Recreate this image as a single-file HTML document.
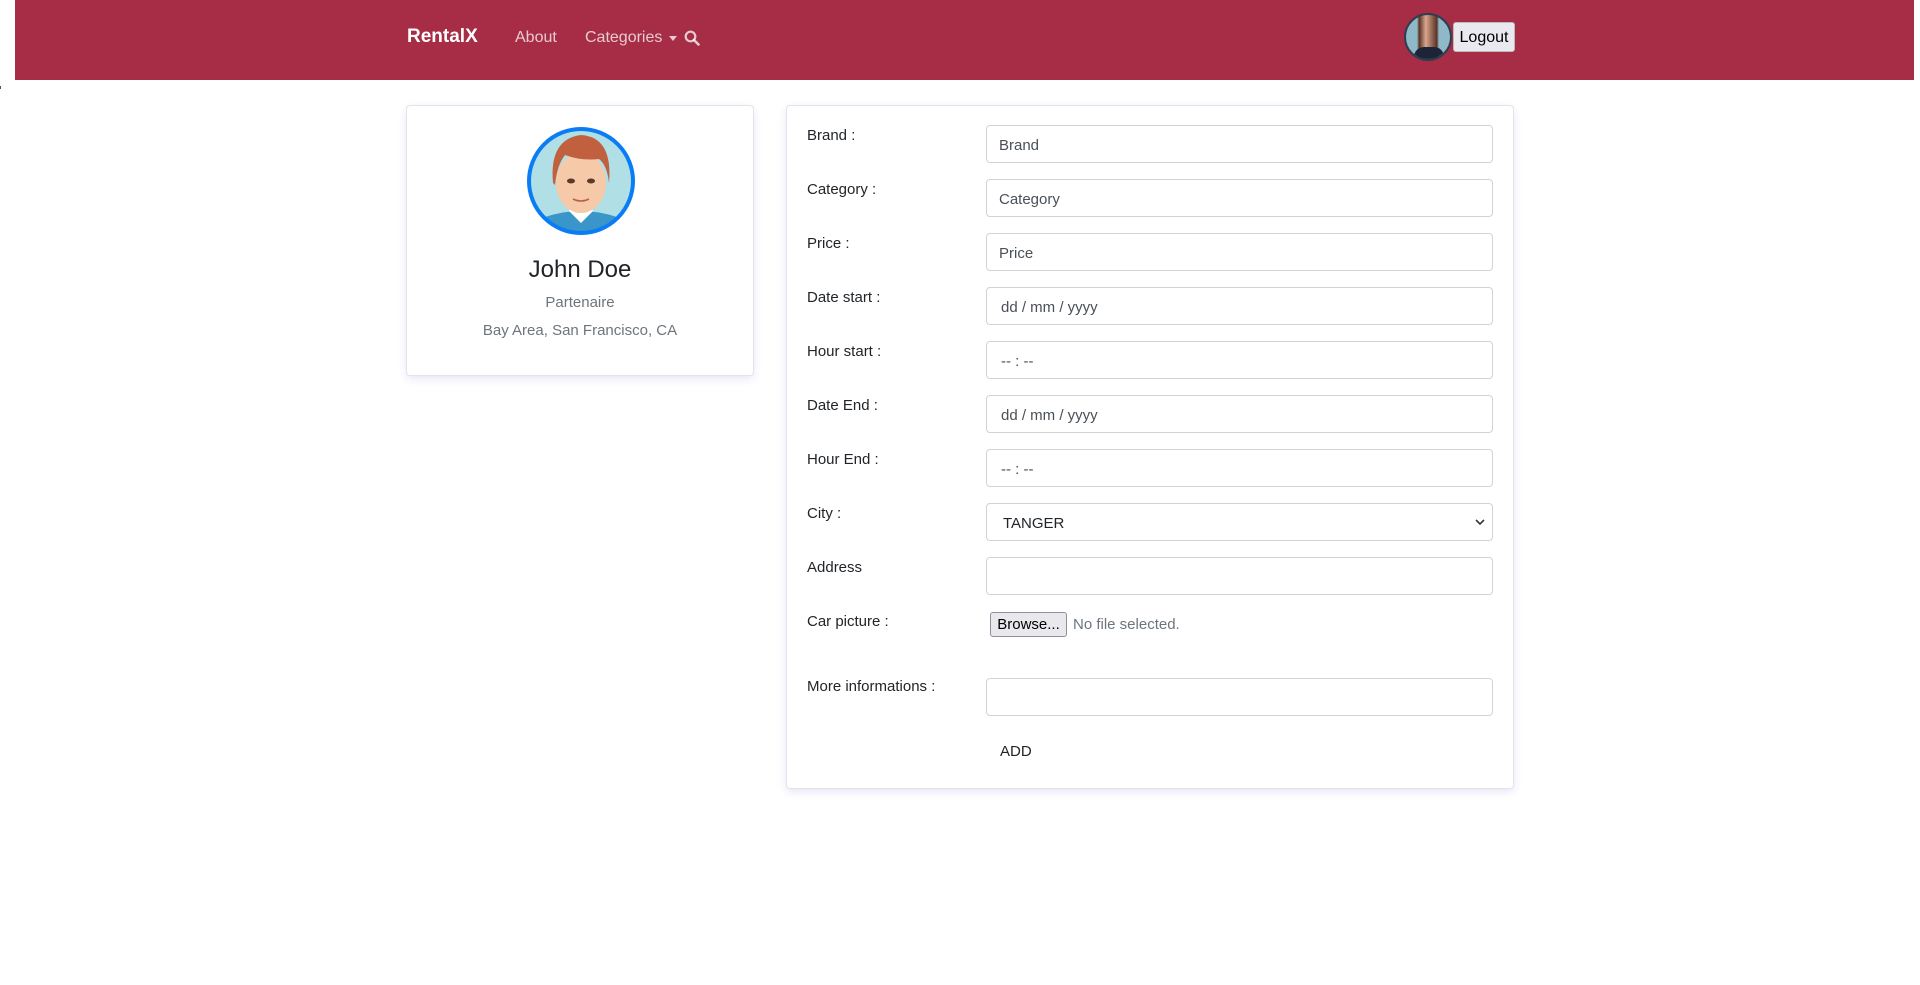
<!DOCTYPE html>
<html><head><meta charset="utf-8"><style>
*{box-sizing:border-box;margin:0;padding:0}
body{width:1920px;height:985px;background:#fff;font-family:"Liberation Sans",sans-serif;color:#212529;position:relative;overflow:hidden}
.nav{position:absolute;left:15px;top:0;width:1899px;height:80px;background:#a62d45}
.abs{position:absolute}
.card{position:absolute;background:#fff;border:1px solid #e3e3ea;border-radius:4px;box-shadow:0 3px 8px rgba(120,120,220,.18)}
.lbl{position:absolute;left:807px;font-size:15px;color:#212529;margin-top:1px}
.inp{position:absolute;left:986px;width:507px;height:38px;border:1px solid #ced4da;border-radius:4px;font-size:15px;color:#495057;padding-left:12px;line-height:39px}
</style></head><body>
<div class="nav">
  <div class="abs" style="left:392px;top:26px;color:#fff;font-weight:bold;font-size:19px">RentalX</div>
  <div class="abs" style="left:500px;top:29px;color:rgba(255,255,255,.75);font-size:16px">About</div>
  <div class="abs" style="left:570px;top:29px;color:rgba(255,255,255,.75);font-size:16px">Categories</div>
  <div class="abs" style="left:654px;top:36px;width:0;height:0;border-left:4px solid transparent;border-right:4px solid transparent;border-top:5px solid rgba(255,255,255,.75)"></div>
  <svg class="abs" style="left:669px;top:30px" width="16" height="16" viewBox="0 0 16 16"><circle cx="6.5" cy="6.5" r="4.8" fill="none" stroke="rgba(255,255,255,.75)" stroke-width="2.2"/><line x1="10" y1="10" x2="14.5" y2="14.5" stroke="rgba(255,255,255,.75)" stroke-width="2.6" stroke-linecap="round"/></svg>
  <div class="abs" style="left:1389px;top:13px;width:48px;height:48px;border-radius:50%;border:2px solid #2c3e50;background:linear-gradient(90deg,#8fb8c8 0%,#8fb8c8 25%,#5a3424 30%,#d9a58e 45%,#5a3424 70%,#8fb8c8 75%);overflow:hidden"><div style="position:absolute;left:8px;top:32px;width:30px;height:16px;background:#1e2438;border-radius:10px 10px 0 0"></div></div>
  <div class="abs" style="left:1438px;top:22px;width:62px;height:30px;background:#e9e9ef;border:1px solid #bbb;border-radius:3px;font-size:16px;color:#000;text-align:center;line-height:30px">Logout</div>
</div>
<div class="abs" style="left:0;top:86px;width:1px;height:3px;background:#555"></div>

<div class="card" style="left:406px;top:105px;width:348px;height:271px">
  <svg class="abs" style="left:118px;top:19px" width="112" height="112" viewBox="0 0 112 112">
    <defs><clipPath id="c"><circle cx="56" cy="56" r="52"/></clipPath></defs>
    <circle cx="56" cy="56" r="52" fill="#b0dfe6"/>
    <g clip-path="url(#c)">
      <path d="M10 112 L20 92 Q56 80 92 92 L102 112Z" fill="#3a96c8"/>
      <path d="M44 86 L56 98 L68 86 L66 80 L46 80Z" fill="#fff"/>
      <ellipse cx="56" cy="58" rx="25" ry="30" fill="#f6c9a8"/>
      <path d="M28 58 Q24 14 56 10 Q88 12 84 58 Q82 40 74 34 Q56 36 40 30 Q32 40 30 60Z" fill="#c0603e"/>
      <ellipse cx="46" cy="56" rx="4" ry="2.5" fill="#5a3a28"/>
      <ellipse cx="66" cy="56" rx="4" ry="2.5" fill="#5a3a28"/>
      <path d="M48 74 Q56 78 64 74" stroke="#b5604a" stroke-width="1.6" fill="none"/>
    </g>
    <circle cx="56" cy="56" r="52" fill="none" stroke="#0a7cf6" stroke-width="4"/>
  </svg>
  <div class="abs" style="left:0;width:100%;top:150px;text-align:center;font-size:24px;color:#212529">John Doe</div>
  <div class="abs" style="left:0;width:100%;top:188px;text-align:center;font-size:15px;color:#6c757d">Partenaire</div>
  <div class="abs" style="left:0;width:100%;top:216px;text-align:center;font-size:15px;color:#6c757d">Bay Area, San Francisco, CA</div>
</div>

<div class="card" style="left:786px;top:105px;width:728px;height:684px"></div>

<div class="lbl" style="top:126px">Brand :</div><div class="inp" style="top:125px">Brand</div>
<div class="lbl" style="top:180px">Category :</div><div class="inp" style="top:179px">Category</div>
<div class="lbl" style="top:234px">Price :</div><div class="inp" style="top:233px">Price</div>
<div class="lbl" style="top:288px">Date start :</div><div class="inp" style="top:287px;padding-left:14px">dd / mm / yyyy</div>
<div class="lbl" style="top:342px">Hour start :</div><div class="inp" style="top:341px;padding-left:14px">-- : --</div>
<div class="lbl" style="top:396px">Date End :</div><div class="inp" style="top:395px;padding-left:14px">dd / mm / yyyy</div>
<div class="lbl" style="top:450px">Hour End :</div><div class="inp" style="top:449px;padding-left:14px">-- : --</div>
<div class="lbl" style="top:504px">City :</div><div class="inp" style="top:503px;padding-left:16px;color:#212529">TANGER<svg style="position:absolute;right:7px;top:15px" width="10" height="7" viewBox="0 0 10 7"><path d="M1 1 L5 5 L9 1" stroke="#343a40" stroke-width="1.6" fill="none"/></svg></div>
<div class="lbl" style="top:558px">Address</div><div class="inp" style="top:557px"></div>
<div class="lbl" style="top:612px">Car picture :</div>
<div class="abs" style="left:990px;top:612px;width:77px;height:25px;background:#e9e9ed;border:1px solid #8f8f9d;border-radius:3px;font-size:15px;color:#000;text-align:center;line-height:23px">Browse...</div>
<div class="abs" style="left:1073px;top:616px;font-size:15px;color:#6c757d">No file selected.</div>
<div class="lbl" style="top:677px">More informations :</div><div class="inp" style="top:678px"></div>
<div class="abs" style="left:1000px;top:743px;font-size:15px;color:#212529">ADD</div>
</body></html>
